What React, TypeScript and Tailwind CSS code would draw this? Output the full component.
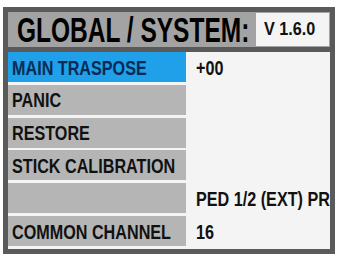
const rows = [
  { label: "MAIN TRASPOSE", value: "+00", active: true },
  { label: "PANIC", value: "" },
  { label: "RESTORE", value: "" },
  { label: "STICK CALIBRATION", value: "" },
  { label: "", value: "PED 1/2 (EXT) PROG" },
  { label: "COMMON CHANNEL", value: "16" },
];

export default function App() {
  return (
    <div
      className="w-[339px] h-[256px] bg-white pt-[7px] pl-[3px] overflow-hidden"
      style={{ fontFamily: '"Liberation Sans", Arial, sans-serif' }}
    >
      <div className="w-[332px] h-[247px] bg-[#5a5a5a] p-[5px] flex flex-col">
        {/* header */}
        <div className="h-[35px] bg-[#a3a3a3] flex items-center">
          <div className="w-[248px] shrink-0 overflow-hidden pl-[9px] text-[35px] font-bold leading-none text-black whitespace-nowrap">
            <span className="inline-block origin-left scale-x-[0.7]">GLOBAL / SYSTEM:</span>
          </div>
          <div className="w-[73px] shrink-0 h-[33px] bg-[#f4f4f4] flex items-center overflow-hidden pl-[8px] text-[18px] font-bold text-[#111] whitespace-nowrap">
            <span className="inline-block origin-left scale-x-[0.9]">V 1.6.0</span>
          </div>
        </div>
        {/* body */}
        <div className="mt-[5px] flex-1 bg-[#f4f4f4] flex flex-col overflow-hidden">
          {rows.map((r, i) => (
            <div key={i} className="h-[33px] flex">
              <div
                className={`w-[178px] shrink-0 h-[30px] flex items-center overflow-hidden pl-[4px] text-[21px] font-bold leading-none whitespace-nowrap ${
                  r.active ? "bg-[#1fa0e8] text-[#0a2a55]" : "bg-[#b5b5b5] text-[#111]"
                }`}
              >
                <span className="inline-block origin-left scale-x-[0.77]">{r.label}</span>
              </div>
              <div className="flex-1 h-[30px] flex items-center pl-[10px] text-[21px] font-bold leading-none text-[#111] whitespace-nowrap overflow-hidden">
                <span className="inline-block origin-left scale-x-[0.77]">{r.value}</span>
              </div>
            </div>
          ))}
        </div>
      </div>
    </div>
  );
}
